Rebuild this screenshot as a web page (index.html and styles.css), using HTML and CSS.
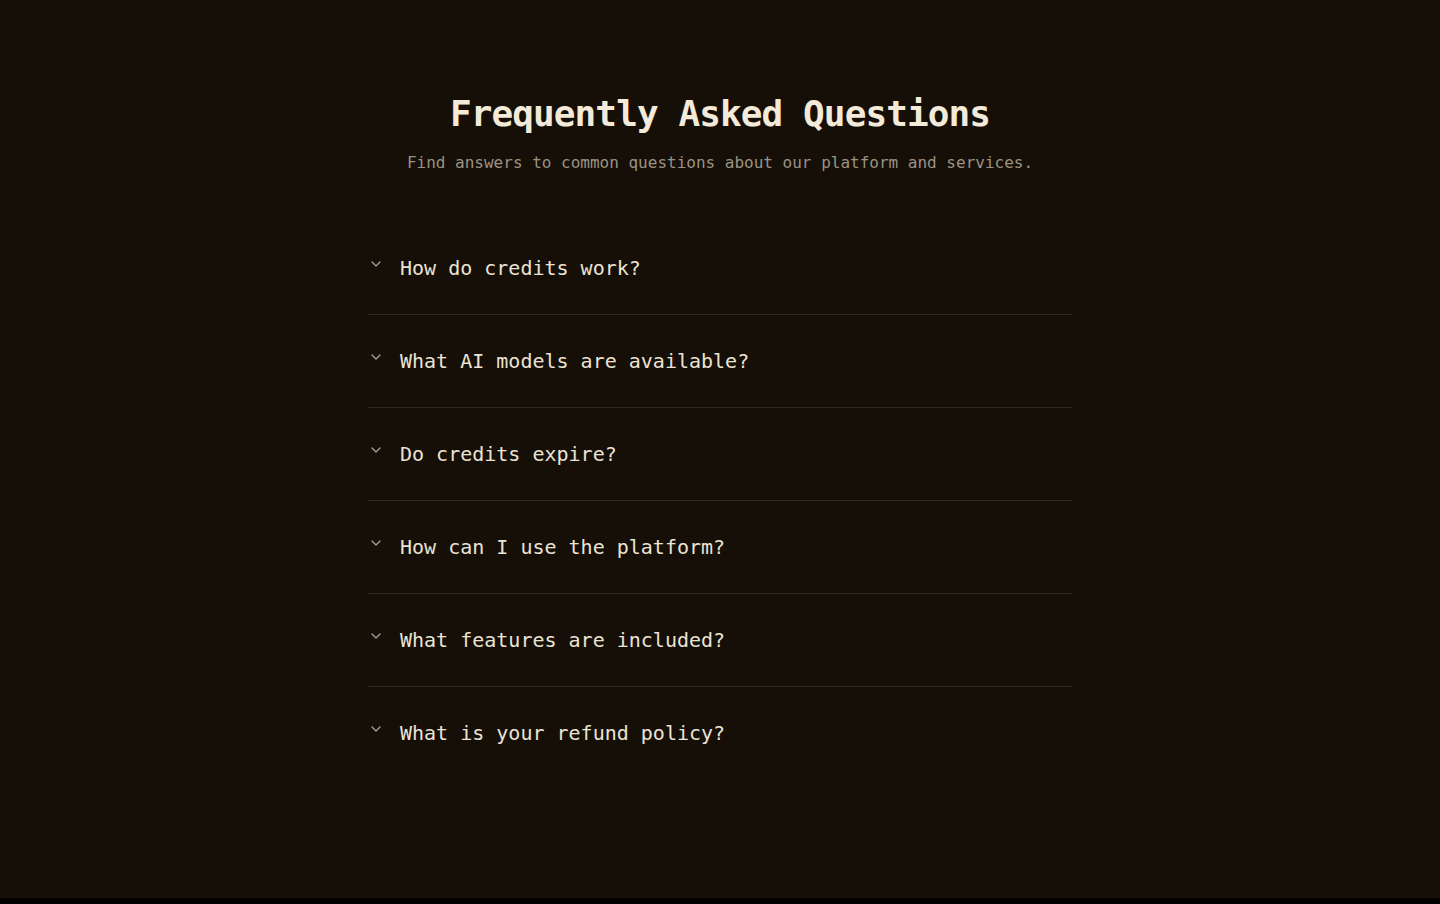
FILE: index.html
```html
<!DOCTYPE html>
<html lang="en">
<head>
<meta charset="utf-8">
<title>FAQ</title>
<link rel="stylesheet" href="styles.css">
</head>
<body>
<main class="page">
  <section class="faq">
    <header class="faq-header">
      <h1 class="faq-title">Frequently Asked Questions</h1>
      <p class="faq-subtitle">Find answers to common questions about our platform and services.</p>
    </header>
    <div class="faq-list">
      <div class="faq-item">
        <svg class="chev" viewBox="0 0 24 24" fill="none" stroke="currentColor" stroke-width="2" stroke-linecap="round" stroke-linejoin="round"><path d="m6 9 6 6 6-6"/></svg>
        <span class="faq-q">How do credits work?</span>
      </div>
      <div class="faq-item">
        <svg class="chev" viewBox="0 0 24 24" fill="none" stroke="currentColor" stroke-width="2" stroke-linecap="round" stroke-linejoin="round"><path d="m6 9 6 6 6-6"/></svg>
        <span class="faq-q">What AI models are available?</span>
      </div>
      <div class="faq-item">
        <svg class="chev" viewBox="0 0 24 24" fill="none" stroke="currentColor" stroke-width="2" stroke-linecap="round" stroke-linejoin="round"><path d="m6 9 6 6 6-6"/></svg>
        <span class="faq-q">Do credits expire?</span>
      </div>
      <div class="faq-item">
        <svg class="chev" viewBox="0 0 24 24" fill="none" stroke="currentColor" stroke-width="2" stroke-linecap="round" stroke-linejoin="round"><path d="m6 9 6 6 6-6"/></svg>
        <span class="faq-q">How can I use the platform?</span>
      </div>
      <div class="faq-item">
        <svg class="chev" viewBox="0 0 24 24" fill="none" stroke="currentColor" stroke-width="2" stroke-linecap="round" stroke-linejoin="round"><path d="m6 9 6 6 6-6"/></svg>
        <span class="faq-q">What features are included?</span>
      </div>
      <div class="faq-item">
        <svg class="chev" viewBox="0 0 24 24" fill="none" stroke="currentColor" stroke-width="2" stroke-linecap="round" stroke-linejoin="round"><path d="m6 9 6 6 6-6"/></svg>
        <span class="faq-q">What is your refund policy?</span>
      </div>
    </div>
  </section>
</main>
</body>
</html>
```
FILE: styles.css
```css
* { box-sizing: border-box; }
html, body { margin: 0; padding: 0; }
body {
  background: #000;
  font-family: "DejaVu Sans Mono", "Liberation Mono", monospace;
}
.page {
  background: #150f08;
  height: 898px;
  overflow: hidden;
  display: flex;
  justify-content: center;
  padding-top: 94px;
}
.faq {
  width: 704px;
}
.faq-header {
  text-align: center;
  margin-bottom: 47px;
}
.faq-title {
  margin: 0;
  font-size: 36px;
  line-height: 40px;
  font-weight: 700;
  letter-spacing: -0.025em;
  color: #f3ead9;
}
.faq-subtitle {
  margin: 17px 0 0;
  font-size: 16px;
  line-height: 24px;
  color: #9c9282;
}
.faq-item {
  display: flex;
  align-items: flex-start;
  gap: 16px;
  padding: 32px 0;
  border-bottom: 1px solid #2f2820;
}
.faq-item:last-child { border-bottom: none; }
.chev {
  width: 16px;
  height: 16px;
  margin-top: 2px;
  flex: none;
  color: #a89d8b;
}
.faq-q {
  font-size: 20px;
  line-height: 28px;
  color: #ebe3d3;
}
```
